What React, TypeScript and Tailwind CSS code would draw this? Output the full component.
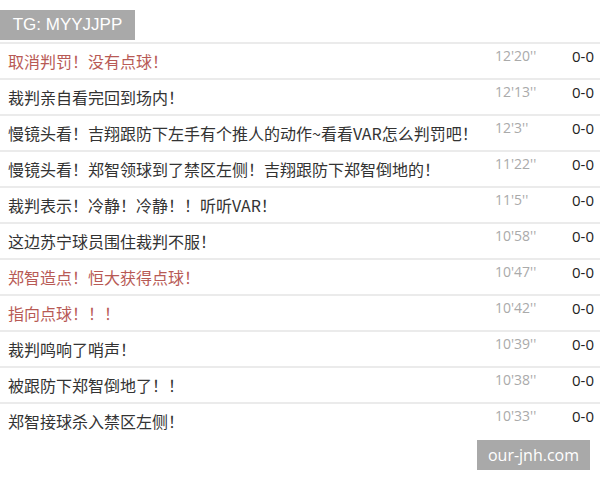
const rows = [
  { text: "取消判罚！没有点球！", time: "12'20''", red: true },
  { text: "裁判亲自看完回到场内！", time: "12'13''" },
  { text: "慢镜头看！吉翔跟防下左手有个推人的动作~看看VAR怎么判罚吧！", time: "12'3''" },
  { text: "慢镜头看！郑智领球到了禁区左侧！吉翔跟防下郑智倒地的！", time: "11'22''" },
  { text: "裁判表示！冷静！冷静！！听听VAR！", time: "11'5''" },
  { text: "这边苏宁球员围住裁判不服！", time: "10'58''" },
  { text: "郑智造点！恒大获得点球！", time: "10'47''", red: true },
  { text: "指向点球！！！", time: "10'42''", red: true },
  { text: "裁判鸣响了哨声！", time: "10'39''" },
  { text: "被跟防下郑智倒地了！！", time: "10'38''" },
  { text: "郑智接球杀入禁区左侧！", time: "10'33''" },
];

export default function App() {
  return (
    <div className="relative w-[600px] h-[480px] bg-white overflow-hidden font-['Noto_Sans_CJK_SC','Noto_Sans',sans-serif]">
      <div className="pt-[10px]">
        <div className="w-[135px] h-[30px] bg-[#a9a9a9] text-white text-[17px] leading-[30px] text-center font-['Liberation_Sans',sans-serif]">
          TG: MYYJJPP
        </div>
      </div>
      <div className="mt-[2px]">
        {rows.map((r, i) => (
          <div key={i} className="flex h-[36px] border-t-2 border-[#ebebeb]">
            <div
              className={`flex-1 pl-[8px] text-[16px] leading-[34px] whitespace-nowrap [text-spacing-trim:space-all] ${r.red ? "text-[#b85a55]" : "text-[#333333]"}`}
            >
              {r.text}
            </div>
            <div className="w-[77px] shrink-0 pt-[2px] text-[14px] leading-5 text-[#aaaaaa] font-['Open_Sans',sans-serif]">
              {r.time}
            </div>
            <div className="w-[28px] shrink-0 pt-[2px] text-[15px] leading-5 text-[#222222] font-['Open_Sans',sans-serif]">
              0-0
            </div>
          </div>
        ))}
      </div>
      <div className="absolute left-[477px] top-[440px] w-[113px] h-[30px] bg-[#a9a9a9] text-white text-[16px] leading-[30px] text-center font-['Open_Sans',sans-serif]">
        our-jnh.com
      </div>
    </div>
  );
}
